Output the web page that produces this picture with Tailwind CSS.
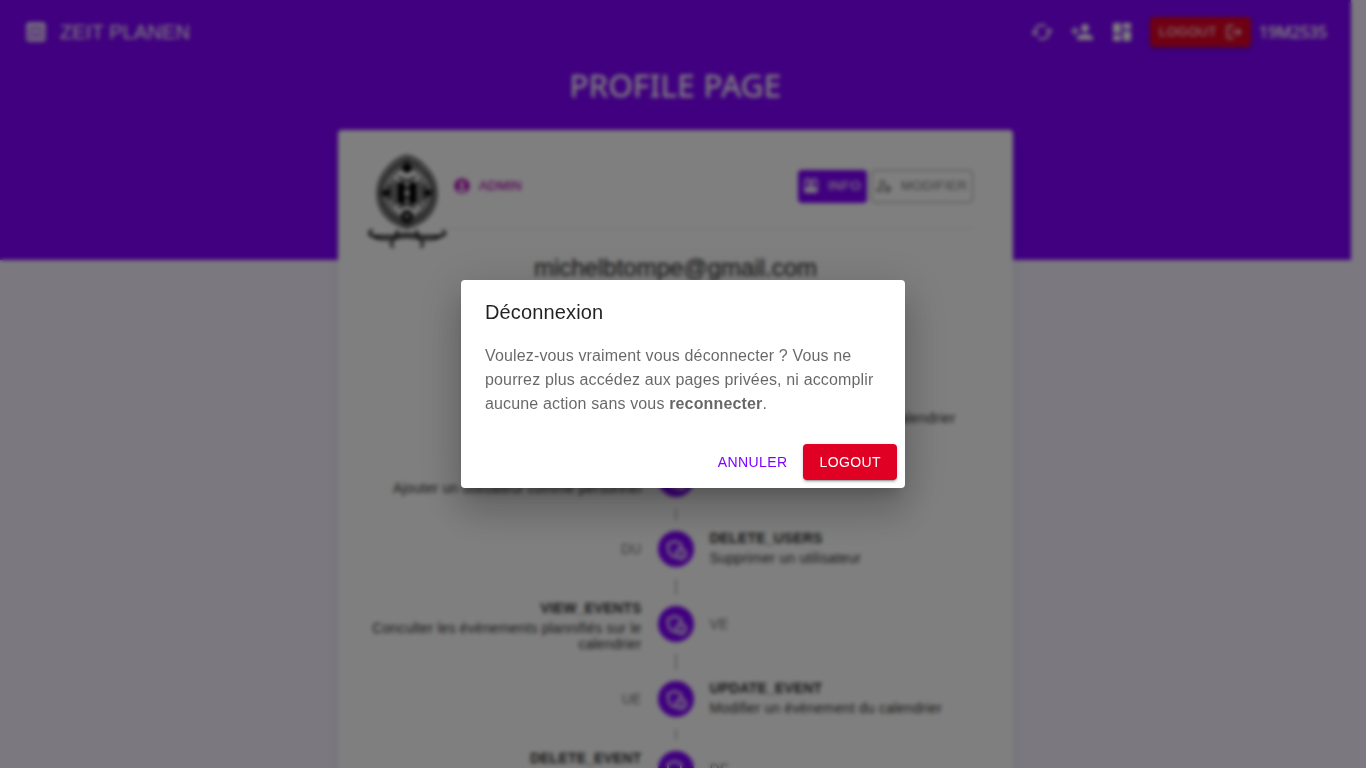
<!DOCTYPE html>
<html lang="fr">
<head>
<meta charset="utf-8">
<title>Zeit Planen</title>
<script src="https://cdn.jsdelivr.net/npm/@tailwindcss/browser@4"></script>
</head>
<body class="h-screen overflow-hidden bg-[#f6f2ff] font-['Liberation_Sans',Arial,sans-serif]">
<svg class="hidden">
  <symbol id="admin" viewBox="0 0 24 24"><path d="M18 11.09V6.27L10.5 3 3 6.27v4.91c0 4.54 3.2 8.79 7.5 9.82.55-.13 1.08-.32 1.6-.55C13.18 21.99 14.97 23 17 23c3.31 0 6-2.69 6-6 0-2.97-2.16-5.43-5-5.91zM11 17c0 .56.08 1.11.23 1.62-.24.11-.48.22-.73.3-3.17-1-5.500-4.240-5.500-7.740v-3.600l5.500-2.400 5.500 2.400v3.510c-2.840.480-5 2.940-5 5.910zm6 4c-2.210 0-4-1.790-4-4s1.790-4 4-4 4 1.790 4 4-1.790 4-4 4z"/><circle cx="17" cy="15.500" r="1.120"/><path d="M17 17.500c-.730 0-2.190.360-2.240 1.080.5.710 1.320 1.170 2.240 1.170s1.740-.460 2.240-1.170c-.050-.720-1.510-1.080-2.240-1.080z"/></symbol>
  <symbol id="logout" viewBox="0 0 24 24"><path d="m17 7-1.410 1.410L18.170 11H8v2h10.170l-2.580 2.580L17 17l5-5zM4 5h8V3H4c-1.100 0-2 .900-2 2v14c0 1.100.900 2 2 2h8v-2H4V5z"/></symbol>
</svg>

<div class="h-full w-[1351px] overflow-hidden">
  <div class="h-[260px] bg-[#8000ff] text-white">
    <header class="flex h-16 items-center justify-between pl-6 pr-6">
      <div class="flex items-center gap-3">
        <svg class="size-6" viewBox="0 0 24 24" fill="currentColor"><path fill-rule="evenodd" d="M4.500 2.500h15a2 2 0 0 1 2 2v15a2 2 0 0 1-2 2h-15a2 2 0 0 1-2-2v-15a2 2 0 0 1 2-2zM5 6.500v2h14v-2zM4.500 11v2.500h4V11zM10 11v8h1.500v-8zM13.500 11v8H15v-8zM16.500 11v2.500h3V11zM4.500 16v2.500h4V16zM16.500 16v2.500h3V16z"/></svg>
        <span class="text-[20px] leading-8 tracking-[0.15px]">ZEIT PLANEN</span>
      </div>
      <div class="flex items-center">
        <div class="flex gap-4">
          <svg class="size-6" viewBox="0 0 24 24" fill="currentColor"><path d="m19 8-4 4h3c0 3.310-2.690 6-6 6-1.010 0-1.970-.250-2.800-.700l-1.460 1.460C8.970 19.540 10.430 20 12 20c4.420 0 8-3.580 8-8h3l-4-4zM6 12c0-3.310 2.690-6 6-6 1.010 0 1.970.250 2.800.700l1.460-1.460C15.030 4.460 13.570 4 12 4c-4.420 0-8 3.580-8 8H1l4 4 4-4H6z"/></svg>
          <svg class="size-6" viewBox="0 0 24 24" fill="currentColor"><path d="M15 12c2.210 0 4-1.790 4-4s-1.790-4-4-4-4 1.790-4 4 1.790 4 4 4zm-9-2V7H4v3H1v2h3v3h2v-3h3v-2H6zm9 4c-2.670 0-8 1.340-8 4v2h16v-2c0-2.660-5.330-4-8-4z"/></svg>
          <svg class="size-6" viewBox="0 0 24 24" fill="currentColor"><path d="M3 13h8V3H3v10zm0 8h8v-6H3v6zm10 0h8V11h-8v10zm0-18v6h8V3h-8z"/></svg>
        </div>
        <div class="ml-4 flex h-[30px] w-[101px] items-center justify-between rounded bg-[#df0024] pl-[9px] pr-[8px] shadow-sm shadow-black/40">
          <span class="text-[13px] tracking-[0.5px]">LOGOUT</span>
          <svg class="size-[18px]" fill="currentColor"><use href="#logout"/></svg>
        </div>
        <span class="ml-2 w-[68px] whitespace-nowrap font-['Noto_Sans',sans-serif] text-[16px] tracking-[-0.2px] [-webkit-text-stroke:0.3px]">19M2535</span>
      </div>
    </header>
    <h1 class="text-center font-['Noto_Sans',sans-serif] text-[31px] leading-[42px] tracking-[0.450px] [-webkit-text-stroke:0.4px]">PROFILE PAGE</h1>
  </div>

  <main class="relative mx-auto -mt-[130px] h-[800px] w-[675px] rounded bg-white pt-6 text-black/85 shadow-lg">
    <div class="flex pl-[29px] pr-10">
      <svg class="h-[96px] w-20 shrink-0" viewBox="0 0 80 96" fill="none" stroke="#000">
        <path d="M40 1.800C46 2 69.500 15 69.500 39S50 71 40 74C30 71 10.500 63 10.500 39S34 2 40 1.800z" stroke-width="1.600"/>
        <path d="M40 6C47 8 65.500 20 65.500 39S50 67 40 70C30 67 14.500 58 14.500 39S33 8 40 6z" stroke-width="4" stroke-dasharray="2.500 .8"/>
        <path d="M40 11C47 13 60.500 24 60.500 39S50 63 40 66C30 63 19.500 54 19.500 39S33 13 40 11z" stroke-width="1.500"/>
        <circle cx="40" cy="14" r="3.500" fill="#000" stroke-width="3"/><circle cx="40" cy="62" r="4" stroke-width="4"/>
        <path d="M31 29h6v20h-6zM43 29h6v20h-6z" fill="#000" stroke-width="2"/>
        <path d="M37 34h6M37 44h6" stroke-width="3"/>
        <path d="M27 26v26M53 26v26M23 31v16M57 31v16" stroke-width="3" stroke-dasharray="3 1"/>
        <path d="M31 23l9 4 9-4M31 54l9-4 9 4" stroke-width="2"/>
        <circle cx="19.500" cy="39" r="2" stroke-width="3"/><circle cx="60.500" cy="39" r="2" stroke-width="3"/>
        <path d="M6 76C1 77 1 82 6 82h20q14-4 28 0h20c5 0 6-4 1-6" stroke-width="1.800"/>
        <path d="M3 80c7 7 14 5 23 5q14-4 28 0c9 0 16 2 22-5M31 76l-3 7M49 76l3 7M27 86c-4 3-4 6 0 7M53 86c4 3 4 6 0 7" stroke-width="2"/>
      </svg>
      <div class="flex h-[75px] flex-1 items-center justify-between border-b border-black/10 pb-[10px] pl-[6px]">
        <div class="flex items-center gap-2 text-[#b000b4]">
          <svg class="size-[18px]" viewBox="0 0 24 24" fill="currentColor"><path d="M12 2C6.480 2 2 6.480 2 12s4.480 10 10 10 10-4.480 10-10S17.520 2 12 2zm0 4c1.930 0 3.500 1.570 3.500 3.500S13.930 13 12 13s-3.500-1.570-3.500-3.500S10.070 6 12 6zm0 14c-2.030 0-4.430-.820-6.140-2.880C7.550 15.800 9.680 15 12 15s4.450.800 6.140 2.120C16.430 19.180 14.030 20 12 20z"/></svg>
          <span class="text-[13px] tracking-[0.2px] [-webkit-text-stroke:0.25px]">ADMIN</span>
        </div>
        <div class="flex gap-1 text-[13px] [-webkit-text-stroke:0.15px]">
          <div class="flex h-[33px] w-[69px] items-center gap-2 rounded bg-[#8000ff] pl-1 text-white">
            <svg class="size-[18px]" viewBox="0 0 24 24" fill="currentColor"><path d="M19 3h-1V1h-2v2H8V1H6v2H5a2 2 0 0 0-2 2v14a2 2 0 0 0 2 2h14a2 2 0 0 0 2-2V5a2 2 0 0 0-2-2zM5 5h14v10H5z" fill-rule="evenodd"/><circle cx="12" cy="8.500" r="3"/><path d="M7 15c0-2.500 3-3.500 5-3.500s5 1 5 3.500z"/></svg>
            <span class="tracking-[0.5px]">INFO</span>
          </div>
          <div class="flex h-[33px] w-[102px] items-center gap-2 whitespace-nowrap rounded border border-black/40 pl-[3px] text-black/50">
            <svg class="size-[18px] shrink-0" viewBox="0 0 24 24" fill="currentColor"><path d="M4 18v-.650c0-.340.160-.660.410-.810C6.100 15.530 8.030 15 10 15c.030 0 .050 0 .080.010.100-.700.300-1.370.590-1.980-.220-.020-.440-.030-.670-.030-2.420 0-4.680.670-6.610 1.820-.880.520-1.390 1.500-1.390 2.530V20h9.260c-.420-.600-.750-1.280-.970-2H4zM10 12c2.210 0 4-1.790 4-4s-1.790-4-4-4-4 1.790-4 4 1.790 4 4 4zm0-6c1.100 0 2 .900 2 2s-.900 2-2 2-2-.900-2-2 .900-2 2-2z"/><circle cx="17" cy="16" r="3" fill="none" stroke="currentColor" stroke-width="2.500"/></svg>
            <span class="tracking-[0.350px]">MODIFIER</span>
          </div>
        </div>
      </div>
    </div>
    <h2 class="-mt-px text-center text-[24px] leading-[38px] text-black/80 [-webkit-text-stroke:0.3px]">michelbtompe@gmail.com</h2>

    <div class="mt-[92.500px] pl-[29.500px] pr-[30px] text-[14px] leading-4 tracking-[0.15px]">
      <div class="flex h-[70px]">
        <div class="w-[274px]"></div>
        <div class="flex w-[68px] shrink-0 flex-col items-center pt-[11.500px]"><span class="flex size-9 items-center justify-center rounded-full bg-[#8000ff] text-white"><svg class="size-6" fill="currentColor"><use href="#admin"/></svg></span><i class="mt-[11.500px] w-0.5 flex-1 bg-[#bdbdbd]"></i></div>
        <div class="w-[246px] whitespace-nowrap pt-[30px] text-right">calendrier</div>
      </div>
      <div class="flex h-[70px]">
        <div class="w-[274px] pt-[30px] text-right">Ajouter un utilisateur comme personnel</div>
        <div class="flex w-[68px] shrink-0 flex-col items-center pt-[11.500px]"><span class="flex size-9 items-center justify-center rounded-full bg-[#8000ff] text-white"><svg class="size-6" fill="currentColor"><use href="#admin"/></svg></span><i class="mt-[11.500px] w-0.5 flex-1 bg-[#bdbdbd]"></i></div>
      </div>
      <div class="flex h-[75px]">
        <div class="w-[274px] pt-[21px] text-right text-black/60">DU</div>
        <div class="flex w-[68px] shrink-0 flex-col items-center pt-[11.500px]"><span class="flex size-9 items-center justify-center rounded-full bg-[#8000ff] text-white"><svg class="size-6" fill="currentColor"><use href="#admin"/></svg></span><i class="mt-[11.500px] w-0.5 flex-1 bg-[#bdbdbd]"></i></div>
        <div class="flex flex-col gap-1 pt-[10px]"><b>DELETE_USERS</b><span>Supprimer un utilisateur</span></div>
      </div>
      <div class="flex h-[75px]">
        <div class="flex w-[274px] flex-col gap-1 pt-[5px] text-right"><b>VIEW_EVENTS</b><span>Conculter les évènements plannifiés sur le calendrier</span></div>
        <div class="flex w-[68px] shrink-0 flex-col items-center pt-[11.500px]"><span class="flex size-9 items-center justify-center rounded-full bg-[#8000ff] text-white"><svg class="size-6" fill="currentColor"><use href="#admin"/></svg></span><i class="mt-[11.500px] w-0.5 flex-1 bg-[#bdbdbd]"></i></div>
        <div class="pt-[21px] text-black/60">VE</div>
      </div>
      <div class="flex h-[70px]">
        <div class="w-[274px] pt-[21px] text-right text-black/60">UE</div>
        <div class="flex w-[68px] shrink-0 flex-col items-center pt-[11.500px]"><span class="flex size-9 items-center justify-center rounded-full bg-[#8000ff] text-white"><svg class="size-6" fill="currentColor"><use href="#admin"/></svg></span><i class="mt-[11.500px] w-0.5 flex-1 bg-[#bdbdbd]"></i></div>
        <div class="flex flex-col gap-1 pt-[10px]"><b>UPDATE_EVENT</b><span>Modifier un évènement du calendrier</span></div>
      </div>
      <div class="flex h-[70px]">
        <div class="w-[274px] pt-[10px] text-right"><b>DELETE_EVENT</b></div>
        <div class="flex w-[68px] shrink-0 flex-col items-center pt-[11.500px]"><span class="flex size-9 items-center justify-center rounded-full bg-[#8000ff] text-white"><svg class="size-6" fill="currentColor"><use href="#admin"/></svg></span></div>
        <div class="pt-[21px] text-black/60">DE</div>
      </div>
    </div>
  </main>
</div>

<div class="fixed inset-0 flex items-center justify-center bg-black/50 backdrop-blur-[2px]">
  <div role="dialog" class="flex h-[208px] w-[444px] flex-col rounded bg-white shadow-[0_11px_15px_-7px_rgba(0,0,0,0.2),0_24px_38px_3px_rgba(0,0,0,0.14),0_9px_46px_8px_rgba(0,0,0,0.12)]">
    <h2 class="px-6 py-4 text-[20px] leading-8 tracking-[0.15px] text-black/87">Déconnexion</h2>
    <p class="px-6 pb-5 text-[16px] leading-6 tracking-[0.15px] text-black/60">Voulez-vous vraiment vous déconnecter ? Vous ne pourrez plus accédez aux pages privées, ni accomplir aucune action sans vous <b>reconnecter</b>.</p>
    <div class="mt-auto flex justify-end gap-2 p-2 text-[14px] leading-[24.500px] tracking-[0.4px]">
      <button class="h-9 pl-2 pr-[7.500px] text-[#8000ff]">ANNULER</button>
      <button class="h-9 w-[94px] rounded bg-[#df0024] pl-[0.5px] text-white shadow-[0_3px_1px_-2px_rgba(0,0,0,0.2),0_2px_2px_0_rgba(0,0,0,0.14),0_1px_5px_0_rgba(0,0,0,0.12)]">LOGOUT</button>
    </div>
  </div>
</div>
</body>
</html>
